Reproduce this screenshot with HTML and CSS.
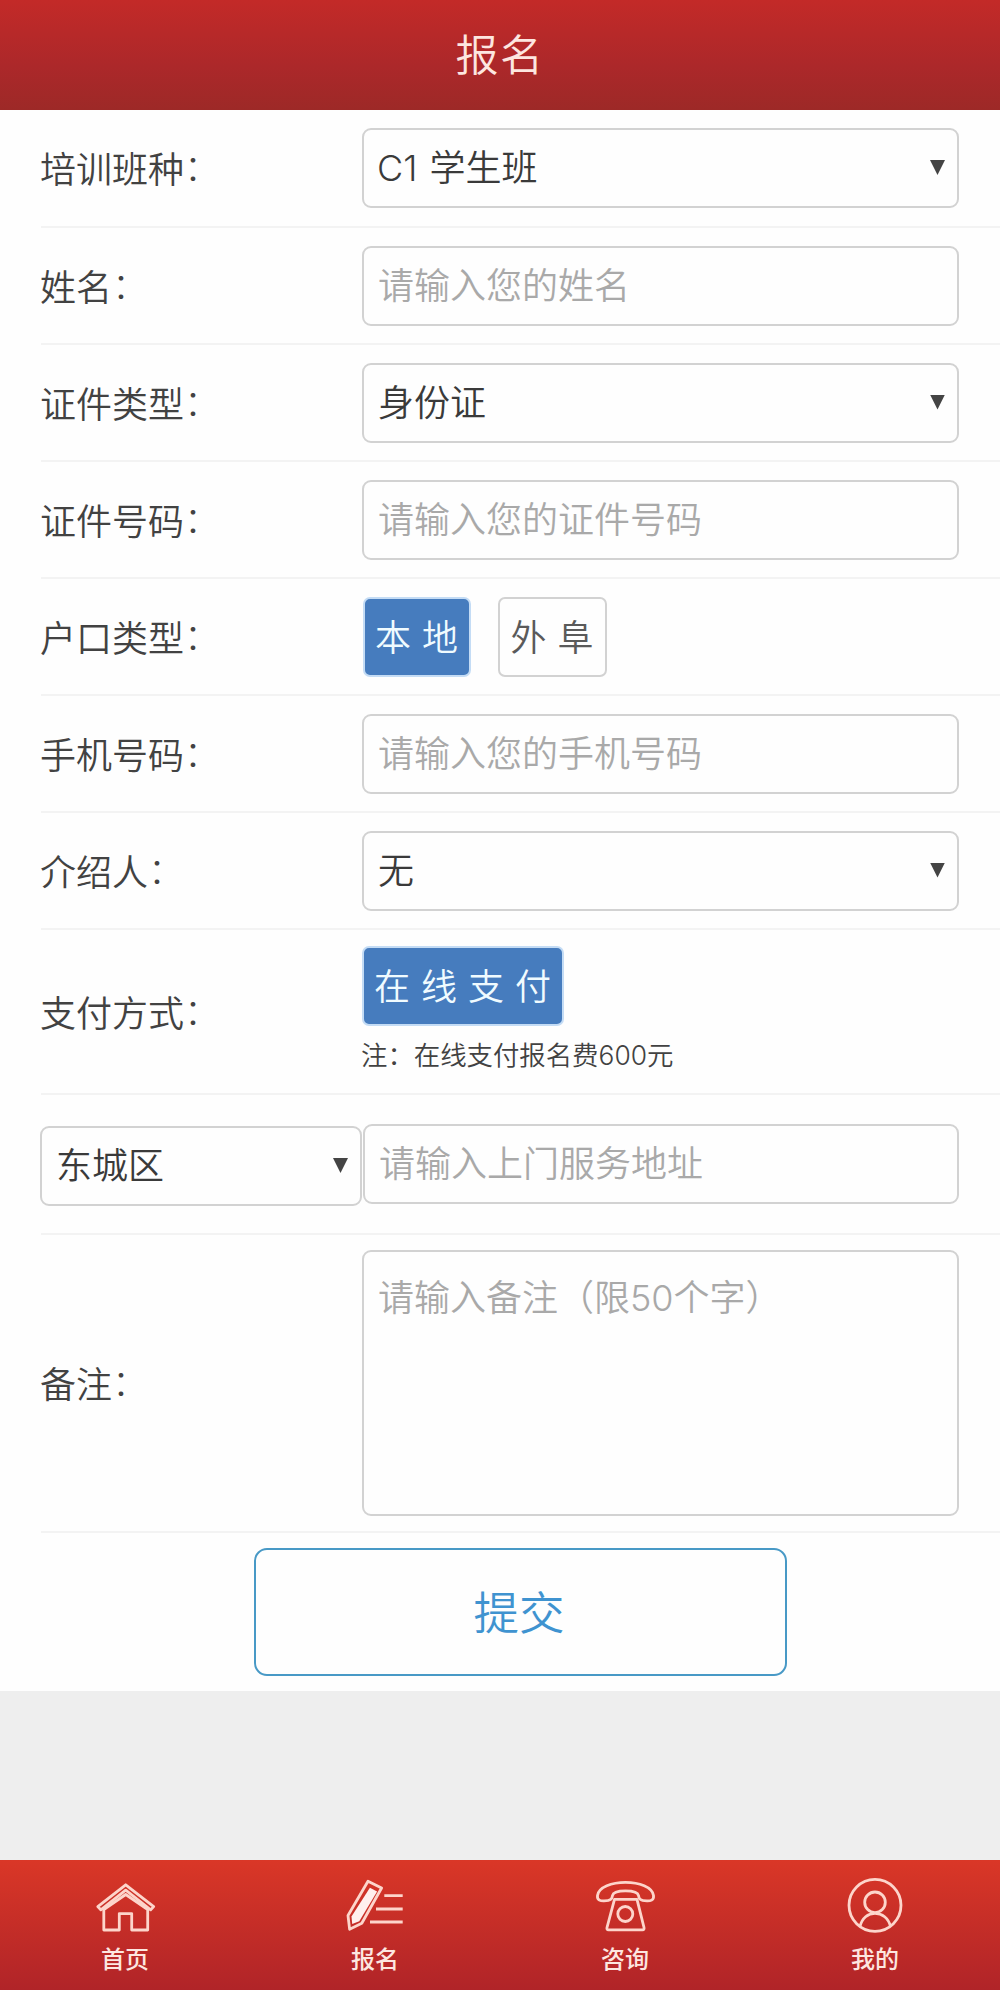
FILE: index.html
```html
<!DOCTYPE html>
<html lang="zh-CN">
<head>
<meta charset="utf-8">
<title>报名</title>
<link rel="stylesheet" href="styles.css">
</head>
<body>
<header class="header"><h1 class="title">报名</h1></header>
<form class="form">
  <div class="row row-first">
    <label class="label">培训班种<span class="colon">：</span></label>
    <div class="select"><select class="control course"><option>C1 学生班</option></select></div>
  </div>
  <div class="row">
    <label class="label">姓名<span class="colon">：</span></label>
    <input class="control" type="text" placeholder="请输入您的姓名">
  </div>
  <div class="row">
    <label class="label">证件类型<span class="colon">：</span></label>
    <div class="select"><select class="control"><option>身份证</option></select></div>
  </div>
  <div class="row">
    <label class="label">证件号码<span class="colon">：</span></label>
    <input class="control" type="text" placeholder="请输入您的证件号码">
  </div>
  <div class="row">
    <label class="label">户口类型<span class="colon">：</span></label>
    <div class="choices">
      <button class="choice choice-on" type="button">本 地</button>
      <button class="choice" type="button">外 阜</button>
    </div>
  </div>
  <div class="row">
    <label class="label">手机号码<span class="colon">：</span></label>
    <input class="control" type="text" placeholder="请输入您的手机号码">
  </div>
  <div class="row">
    <label class="label">介绍人<span class="colon">：</span></label>
    <div class="select"><select class="control"><option>无</option></select></div>
  </div>
  <div class="row row-pay">
    <label class="label">支付方式<span class="colon">：</span></label>
    <div class="pay">
      <button class="choice choice-on choice-pay" type="button">在 线 支 付</button>
      <p class="note">注：在线支付报名费600元</p>
    </div>
  </div>
  <div class="row row-address">
    <div class="select district"><select class="control"><option>东城区</option></select></div>
    <input class="control" type="text" placeholder="请输入上门服务地址">
  </div>
  <div class="row row-remark">
    <label class="label">备注<span class="colon">：</span></label>
    <textarea class="control remark" placeholder="请输入备注（限50个字）"></textarea>
  </div>
  <div class="actions"><button class="submit" type="button">提交</button></div>
</form>
<nav class="nav">
  <a class="tab">
    <svg class="icon" viewBox="0 0 64 64"><path d="M32.700 8.800 4.800 30.600l3 3.200L32.700 14.200 57.700 33.800l3-3.200z"/><path d="M10.800 33.500V54h15.500V37.600h12.400V54h16V33.500L32.700 18.500z"/></svg>
    <span class="tab-text">首页</span>
  </a>
  <a class="tab">
    <svg class="icon" viewBox="0 0 64 64"><path d="M25 5.200 38.600 12 18.800 47.300 6.600 53.200 5 39.500z"/><path class="solid" d="m26.900 11.800 7.200 3.600L16.300 45.300 9.200 48 8.500 40.500z"/><path d="M41.300 19.700h18.400M33 33h26.700M27 46h32.700"/></svg>
    <span class="tab-text">报名</span>
  </a>
  <a class="tab">
    <svg class="icon" viewBox="0 0 64 64"><path d="M4.500 19.500C5.500 11 19 6.300 32.500 6.300S59.500 11 60.500 19.500C61.200 24.500 57 25 54 24.900 46.500 24.800 46 22.500 45.500 19.500 44.800 15.500 39 14.800 32.500 14.800S20.200 15.500 19.500 19.500C19 22.500 18.500 24.800 11 24.900 8 25 3.800 24.500 4.500 19.500z"/><path d="M21.500 23.300h22.500L51 51.500q.5 2.300-1.500 2.300h-34q-2 0-1.500-2.300z"/><circle cx="32.300" cy="38" r="7.500"/></svg>
    <span class="tab-text">咨询</span>
  </a>
  <a class="tab">
    <svg class="icon" viewBox="0 0 64 64"><circle cx="32" cy="29.300" r="26"/><circle cx="32" cy="26.300" r="10.300"/><path d="M17 50.500C19 42 25 37.300 32 37.300S45.500 42 47.500 50.500"/></svg>
    <span class="tab-text">我的</span>
  </a>
</nav>
</body>
</html>
```
FILE: styles.css
```css
* { box-sizing: border-box; }

body {
  margin: 0;
  width: 1000px;
  height: 1990px;
  display: flex;
  flex-direction: column;
  background: #eeeeee;
  color: #424242;
  font-family: Inter, "Noto Sans CJK SC", sans-serif;
  font-size: 36px;
  font-weight: 350;
}

.header {
  height: 110px;
  display: flex;
  justify-content: center;
  align-items: center;
  background: linear-gradient(#c32a28, #ac282a 60%, #9d2927);
}

.title {
  margin: 0;
  color: #fde6e0;
  font-size: 43px;
  font-weight: 350;
  letter-spacing: 1.5px;
  line-height: 60px;
}

.form { background: #fefefe; }

.row {
  height: 117px;
  margin-left: 41px;
  padding-right: 41px;
  display: flex;
  align-items: center;
  border-bottom: 2px solid #f3f3f3;
}

.row-first { height: 118px; }
.row-pay { height: 165px; }
.row-address { height: 140px; }
.row-remark { height: 298px; }

.label {
  width: 322px;
  flex: none;
  margin-left: -1px;
  padding-top: 4px;
  line-height: 50px;
}

.colon {
  display: inline-block;
  font-weight: 300;
  line-height: 1;
  transform: translateY(-2.5px);
}

.select {
  position: relative;
  flex: 1;
  display: flex;
}

.select::after {
  content: "";
  position: absolute;
  right: 14px;
  top: 32px;
  width: 15px;
  height: 15px;
  background: #444;
  clip-path: polygon(0 0, 100% 0, 50% 100%);
}

.control {
  flex: 1;
  min-width: 0;
  height: 80px;
  padding: 0 14px;
  border: 2px solid #d2d2d2;
  border-radius: 9px;
  background: #fefefe;
  color: #3a3a3a;
  font: inherit;
  line-height: 50px;
  appearance: none;
  outline: none;
}

.control::placeholder { color: #a9a9a9; opacity: 1; }

.course { padding-left: 13px; word-spacing: 2px; }

.district { flex: none; width: 322px; margin-left: -1px; top: 2px; }

.row-address > .control { margin-left: 1px; }

.remark {
  height: 266px;
  padding-top: 21px;
  resize: none;
}

.choices { display: flex; gap: 26px; margin-left: 1px; }

.choice {
  height: 80px;
  width: 109px;
  padding: 0 1px 4px 0;
  border: 2px solid #d2d2d2;
  border-radius: 7px;
  background: #fefefe;
  color: #5a5a5a;
  font: inherit;
  font-family: "Noto Sans CJK SC", sans-serif;
  word-spacing: 3px;
  white-space: nowrap;
}

.choice-on {
  width: 108px;
  border-color: #c4dcf5;
  background: #467cbe;
  color: #f0fbff;
}

.choices .choice-on { margin-right: 1px; }

.choice-pay { width: 202px; display: block; }

.pay { margin-top: -4px; }

.note {
  margin: 11px 0 0 -1px;
  font-size: 26.400px;
  line-height: 36px;
}

.actions {
  height: 158px;
  padding: 15px 0 0 253.500px;
}

.submit {
  width: 533px;
  height: 128px;
  padding: 0 2px 4px 0;
  border: 2px solid #4899c6;
  border-radius: 13px;
  background: #fefefe;
  color: #3f93d0;
  font: inherit;
  font-size: 45.500px;
}

.nav {
  height: 130px;
  margin-top: auto;
  padding-top: 16px;
  display: grid;
  grid-template-columns: repeat(4, 1fr);
  background: linear-gradient(#da3727, #b02428);
}

.tab {
  display: flex;
  flex-direction: column;
  align-items: center;
  color: #fde6e0;
}

.icon {
  width: 64px;
  height: 64px;
  fill: none;
  stroke: #fdd5cb;
  stroke-width: 2.8;
  stroke-linejoin: round;
}

.icon .solid { fill: #fff0ee; stroke: none; }

.tab-text {
  padding-top: 2px;
  font-size: 24px;
  font-weight: 500;
  line-height: 36px;
}
```
